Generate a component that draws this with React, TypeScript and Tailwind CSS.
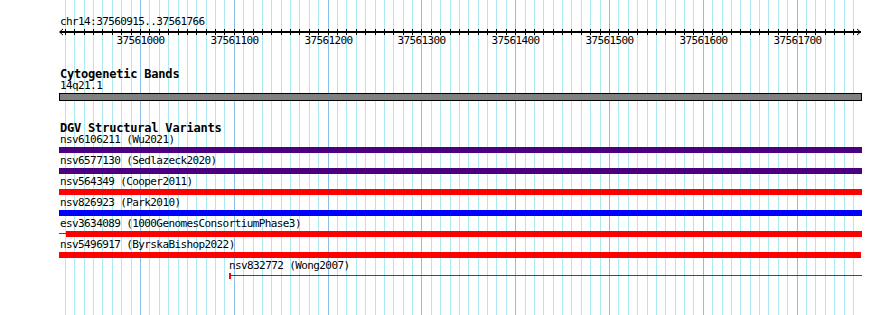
import React from "react";

const START = 37560915;
const END = 37561766;

// pixel position of a base on the 890px canvas
const bpX = (bp: number) => Math.round(140 + (bp - 37561000) * 0.938);

const gridBases: number[] = [];
for (let bp = 37560920; bp <= 37561760; bp += 10) gridBases.push(bp);

const majors = gridBases.filter((bp) => bp % 100 === 0);

type Variant = {
  name: string;
  study: string;
  color: string;
  kind?: "split" | "line" | "short";
};

const variants: Variant[] = [
  { name: "nsv6106211", study: "Wu2021", color: "bg-[#4b0082]" },
  { name: "nsv6577130", study: "Sedlazeck2020", color: "bg-[#4b0082]" },
  { name: "nsv564349", study: "Cooper2011", color: "bg-[#ff0000]" },
  { name: "nsv826923", study: "Park2010", color: "bg-[#0000ff]" },
  { name: "esv3634089", study: "1000GenomesConsortiumPhase3", color: "bg-[#ff0000]", kind: "split" },
  { name: "nsv5496917", study: "ByrskaBishop2022", color: "bg-[#ff0000]", kind: "short" },
];

function Grid() {
  return (
    <div className="absolute inset-0">
      {gridBases.map((bp) => (
        <div
          key={bp}
          className={`absolute top-0 h-full w-px ${bp % 100 === 0 ? "bg-[#8cbfe8]" : "bg-[#aaeaf0]"}`}
          style={{ left: bpX(bp) }}
        />
      ))}
    </div>
  );
}

function Ruler() {
  return (
    <svg width={890} height={18} className="block overflow-visible">
      <rect x={60} y={2} width={801} height={2} fill="#000" />
      <polyline points="63,0 59.5,3 63,6" fill="none" stroke="#000" strokeWidth={1} />
      <polyline points="857,0 860.5,3 857,6" fill="none" stroke="#000" strokeWidth={1} />
      {gridBases.map((bp) => (
        <rect key={bp} x={bpX(bp)} y={0} width={1} height={6} fill="#000" />
      ))}
      {majors.map((bp) => (
        <text
          key={bp}
          x={bpX(bp) + 0.5}
          y={15.3}
          textAnchor="middle"
          fontSize={11}
          letterSpacing={-0.6}
          fontFamily="'DejaVu Sans Mono', monospace"
          fill="#000"
        >
          {bp}
        </text>
      ))}
    </svg>
  );
}

function Label({ children }: { children: React.ReactNode }) {
  return (
    <div className="h-[14px] whitespace-pre text-[11px] leading-[14px] tracking-[-0.6px] text-black">
      {children}
    </div>
  );
}

function TrackTitle({ children }: { children: React.ReactNode }) {
  return (
    <div className="h-[10px] pl-[60px] whitespace-pre text-[12px] font-bold leading-[10px] tracking-[-0.2px] text-black">
      {children}
    </div>
  );
}

function VariantRow({ v }: { v: Variant }) {
  return (
    <div className="mb-px">
      <div className="pl-[60px]">
        <Label>{`${v.name} (${v.study})`}</Label>
      </div>
      {v.kind === "split" ? (
        <div className="ml-[59px] flex h-[6px] w-[803px]">
          <div className={`mt-[2px] h-px w-[7px] ${v.color}`} />
          <div className={`h-[6px] flex-1 ${v.color}`} />
        </div>
      ) : (
        <div className={`ml-[59px] h-[6px] ${v.kind === "short" ? "w-[802px]" : "w-[803px]"} ${v.color}`} />
      )}
    </div>
  );
}

export default function App() {
  const wongLeft = 229;
  return (
    <div className="relative h-[315px] w-[890px] overflow-hidden bg-white font-['DejaVu_Sans_Mono',monospace]">
      <Grid />
      <div className="relative flex flex-col pt-[15px]">
        <div className="pl-[60px]">
          <Label>{`chr14:${START}..${END}`}</Label>
        </div>
        <Ruler />

        <div className="mt-[22px]">
          <TrackTitle>Cytogenetic Bands</TrackTitle>
          <div className="pl-[60px]">
            <Label>14q21.1</Label>
          </div>
          <div className="ml-[59px] h-[8px] w-[803px] border border-black bg-[#808080]" />
        </div>

        <div className="mt-[22px]">
          <TrackTitle>DGV Structural Variants</TrackTitle>
          {variants.map((v) => (
            <VariantRow key={v.name} v={v} />
          ))}
          <div>
            <div className="pl-[229px]">
              <Label>nsv832772 (Wong2007)</Label>
            </div>
            <div className="flex h-[6px] w-[862px]" style={{ paddingLeft: wongLeft }}>
              <div className="h-[6px] w-[2px] bg-[#ff0000]" />
              <div className="mt-[2px] h-px flex-1 bg-[#ff0000]" />
            </div>
          </div>
        </div>
      </div>
    </div>
  );
}
